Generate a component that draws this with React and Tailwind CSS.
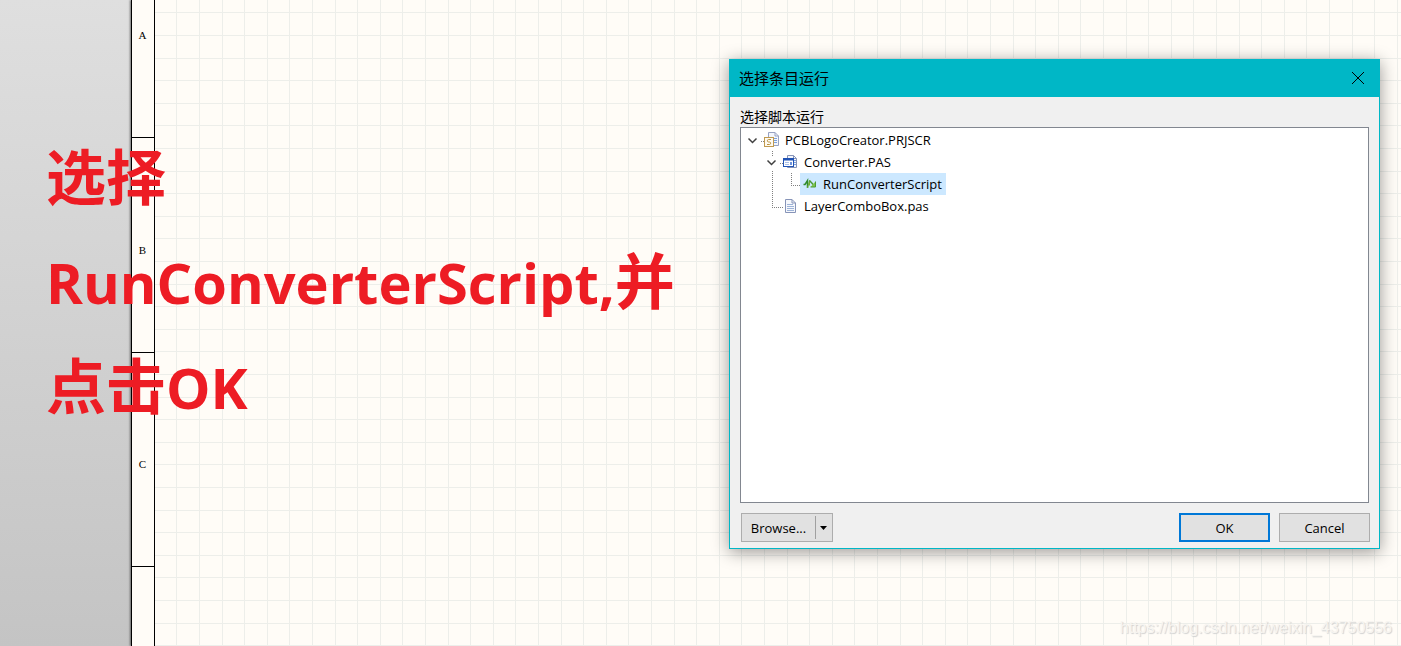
import React, { useState } from 'react';

const UI_FONT = "font-['Open_Sans','Noto_Sans_CJK_SC',sans-serif]";

const GRID_STEP = 22.6;

const SheetGrid = () => {
  const columns = Array.from({ length: 120 }, (_, i) => Math.round(21.4 + i * GRID_STEP) + 0.5);
  const rows = Array.from({ length: 80 }, (_, i) => Math.round(12.4 + i * GRID_STEP) + 0.5);

  return (
    <svg className="absolute inset-0 w-full h-full" stroke="#edeeea" aria-hidden="true">
      {columns.map((x) => (
        <line key={`x${x}`} x1={x} y1="0" x2={x} y2="100%" />
      ))}
      {rows.map((y) => (
        <line key={`y${y}`} x1="0" y1={y} x2="100%" y2={y} />
      ))}
    </svg>
  );
};

const Ruler = () => (
  <div className="w-6 shrink-0 flex flex-col bg-[#fffcf7] border-x border-black font-['Liberation_Serif',serif] text-[11px] leading-3 text-black shadow-[-1px_0_2px_rgba(0,0,0,0.5)]">
    <div className="h-[138px] shrink-0 flex items-end justify-center pb-24 pr-px border-b border-black">A</div>
    <div className="h-[215px] shrink-0 flex items-end justify-center pb-24 pr-px border-b border-black">B</div>
    <div className="h-[214px] shrink-0 flex items-end justify-center pb-24 pr-px border-b border-black">C</div>
    <div className="flex-1" />
  </div>
);

const ProjectIcon = () => (
  <svg className="w-4 h-4 shrink-0" viewBox="0 0 16 16" fill="none" aria-hidden="true">
    <path d="M5.5 0.5h6.5l3.5 3.5v9.5h-10z" fill="#f3f6fc" stroke="#98a2c2" />
    <path d="M12 0.5v3.5h3.5" stroke="#98a2c2" />
    <path d="M11 6.5h3M11 8.5h3M11 10.5h3" stroke="#7aa0dc" />
    <rect x="1.5" y="5.5" width="9" height="9" fill="#fffaf0" stroke="#c09a50" />
    <path d="M8 7.5H5.5C4 7.5 4 10 5.5 10h1C8 10 8 12.5 6.5 12.5H4" stroke="#b8923f" />
  </svg>
);

const FormIcon = () => (
  <svg className="w-4 h-4 shrink-0" viewBox="0 0 16 16" fill="none" aria-hidden="true">
    <path d="M5.5 1.5h6l3 3v9h-9z" fill="#f3f6fc" stroke="#8794b8" />
    <path d="M11.5 1.5v3h3" stroke="#8794b8" />
    <path d="M12 6.5h2M12 8.5h2M12 10.5h2" stroke="#7aa0dc" />
    <rect x="1.5" y="4.5" width="10" height="8" fill="#fff" stroke="#2153b5" />
    <path d="M1 5.5h11" stroke="#2153b5" strokeWidth="2" />
    <path d="M3 8.5h4M3 10.5h4" stroke="#a9c0ea" />
    <rect x="8" y="8" width="2" height="3" fill="#6d93dd" />
  </svg>
);

const ProcedureIcon = () => (
  <svg className="w-4 h-4 shrink-0" viewBox="0 0 16 16" fill="none" aria-hidden="true">
    <path d="M2.5 8.5h1.5L6.500 4.500v7.500" stroke="#2f8a2c" strokeWidth="1.5" />
    <path d="M6.500 12L8.500 4.500v5" stroke="#6fae35" />
    <path d="M8.500 4.500l5 5.500" stroke="#4c9c34" strokeWidth="1.5" />
    <path d="M14.500 5.500v5.500H9.500z" fill="#7fc44c" />
    <path d="M14.500 5.500v5.500H9.500" stroke="#4c9c34" />
  </svg>
);

const DocumentIcon = () => (
  <svg className="w-4 h-4 shrink-0" viewBox="0 0 16 16" fill="none" aria-hidden="true">
    <path d="M3.5 1.5h6.5l3.5 3.5v9.5h-10z" fill="#f6f8fc" stroke="#8794b8" />
    <path d="M10 1.5v3.5h3.5" stroke="#8794b8" />
    <path d="M5 6.5h6M5 8.5h7M5 10.5h7M5 12.5h7" stroke="#9db3d8" />
  </svg>
);

const Chevron = () => (
  <svg className="w-3 h-3" viewBox="0 0 12 12" fill="none" stroke="#404040" strokeWidth="1.5" aria-hidden="true">
    <path d="M1.5 4.5l4 4l4-4" />
  </svg>
);

// dotted connectors between the tree nodes
const TreeLines = () => (
  <svg className="absolute left-0 top-0 w-20 h-24" fill="none" stroke="#808080" strokeDasharray="1 1" aria-hidden="true">
    <path d="M20 13.5h3" />
    <path d="M31.5 23v5" />
    <path d="M39 35.5h3" />
    <path d="M50.5 45v13M50 57.5h10" />
    <path d="M31.5 43v37M31 79.5h12" />
  </svg>
);

const nodes = [
  { name: 'PCBLogoCreator.PRJSCR', indent: 'pl-[6px]', icon: ProjectIcon, open: true },
  { name: 'Converter.PAS', indent: 'pl-[25px]', icon: FormIcon, open: true },
  { name: 'RunConverterScript', indent: 'pl-[44px]', icon: ProcedureIcon },
  { name: 'LayerComboBox.pas', indent: 'pl-[25px]', icon: DocumentIcon },
];

const ScriptTree = ({ selected, onSelect }) => (
  <div className="relative h-[376px] pt-px bg-white border border-[#828790]">
    <TreeLines />
    <ul className="relative" aria-labelledby="script-label">
      {nodes.map(({ name, indent, icon: Icon, open }) => (
        <li key={name} className={`h-[22px] flex items-center ${indent}`}>
          {open ? (
            <button type="button" className="w-3" aria-label={`Collapse ${name}`}>
              <Chevron />
            </button>
          ) : (
            <span className="w-3" />
          )}
          <button
            type="button"
            onClick={() => onSelect(name)}
            className={`ml-[3px] h-[22px] pl-px pr-1 flex items-center gap-1.5 whitespace-nowrap ${
              selected === name ? 'bg-[#cce8ff]' : ''
            }`}
          >
            <Icon />
            {name}
          </button>
        </li>
      ))}
    </ul>
  </div>
);

const RunDialog = () => {
  const [selected, setSelected] = useState('RunConverterScript');

  return (
    <div
      role="dialog"
      aria-labelledby="dialog-title"
      className={`absolute right-[21px] top-[59px] w-[651px] bg-[#f0f0f0] border border-[#00b7c6] shadow-[0_3px_16px_rgba(0,0,0,0.4)] text-[13px] leading-5 text-black ${UI_FONT}`}
    >
      <div className="h-[37px] flex items-center justify-between pl-[9px] pr-[14px] pb-[2px] bg-[#00b7c6]">
        <h1 id="dialog-title" className="text-[15px]">选择条目运行</h1>
        <button type="button" aria-label="Close">
          <svg className="w-[14px] h-[14px]" viewBox="0 0 14 14" fill="none" stroke="#000" aria-hidden="true">
            <path d="M1 1l12 12M13 1L1 13" />
          </svg>
        </button>
      </div>
      <div className="px-[10px] pt-[10px]">
        <p id="script-label" className="text-[14px]">选择脚本运行</p>
        <ScriptTree selected={selected} onSelect={setSelected} />
      </div>
      <div className="flex items-center pt-[10px] pb-[6px] pl-[11px] pr-[9px]">
        <div className="flex w-[92px] h-[29px] bg-[#e1e1e1] border border-[#adadad]">
          <button type="button" className="flex-1">Browse...</button>
          <button
            type="button"
            aria-label="More browse options"
            className="w-[17px] my-[2px] pr-[2px] flex items-center justify-center border-l border-[#a0a0a0]"
          >
            <svg className="w-[7px] h-1" viewBox="0 0 7 4" aria-hidden="true">
              <path d="M0 0h7L3.5 4z" />
            </svg>
          </button>
        </div>
        <button type="button" className="ml-auto w-[91px] h-[29px] bg-[#e1e1e1] border-2 border-[#0078d7]">OK</button>
        <button type="button" className="ml-[9px] w-[91px] h-[29px] bg-[#e1e1e1] border border-[#adadad]">Cancel</button>
      </div>
    </div>
  );
};

const App = () => {
  return (
    <div className="relative flex min-h-screen overflow-hidden">
      <div className="w-[131px] shrink-0 bg-linear-to-b from-[#dfdfdf] to-[#c4c4c4]" />
      <Ruler />
      <div className="relative flex-1 bg-[#fffcf7]">
        <SheetGrid />
      </div>

      <p className="absolute left-[46px] top-[125px] font-['Open_Sans','Noto_Sans_CJK_SC',sans-serif] font-bold text-[60px] leading-[104px] text-[#ed1c24] whitespace-nowrap">
        选择
        <br />
        <span className="text-[56px]">RunConverterScript,</span>并
        <br />
        点击<span className="text-[56px]">OK</span>
      </p>

      <RunDialog />

      <p className="absolute right-[9px] bottom-[6px] font-['Liberation_Sans',sans-serif] text-[16px] leading-6 text-[#f7f5f1] [text-shadow:1px_1px_1px_#d0d0d0]">
        https://blog.csdn.net/weixin_43750556
      </p>
    </div>
  );
};

export default App;
